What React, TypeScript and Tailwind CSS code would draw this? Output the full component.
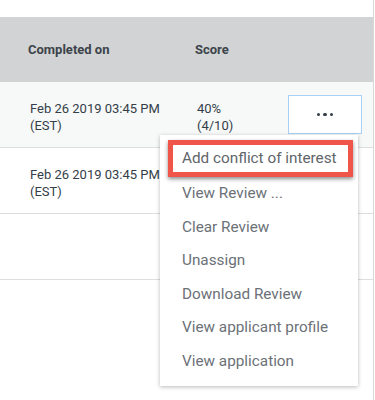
import React from "react";

const font = { fontFamily: 'Roboto, "Open Sans", Arial, sans-serif' };

function Row({ bg, score, action }: { bg: string; score?: [string, string]; action?: boolean }) {
  return (
    <div className={`flex h-[66px] items-center border-b border-[#dcdedf] ${bg}`}>
      <div className="w-[195px] pl-[30px] pt-[4px] text-[13px] leading-[17px] text-[#333e48]">
        <div>Feb 26 2019 03:45 PM</div>
        <div>(EST)</div>
      </div>
      <div className="w-[93px] pl-[2px] pt-[4px] text-[13px] leading-[17px] text-[#333e48]">
        {score && (
          <>
            <div>{score[0]}</div>
            <div>{score[1]}</div>
          </>
        )}
      </div>
      {action && (
        <button className="flex h-[39px] w-[74px] items-center justify-center gap-[3px] border border-[#a9d1f7] bg-white">
          <span className="h-[3.5px] w-[3.5px] rounded-full bg-[#333e48]" />
          <span className="h-[3.5px] w-[3.5px] rounded-full bg-[#333e48]" />
          <span className="h-[3.5px] w-[3.5px] rounded-full bg-[#333e48]" />
        </button>
      )}
    </div>
  );
}

export default function App() {
  const items = [
    "View Review ...",
    "Clear Review",
    "Unassign",
    "Download Review",
    "View applicant profile",
    "View application",
  ];
  return (
    <div className="relative h-[400px] w-[375px] overflow-hidden bg-white" style={font}>
      <div className="h-[400px] w-[374px] border-r border-[#d6d8d9] pt-[17px]">
        <div className="flex h-[65px] items-center bg-[#d1d3d4] text-[13px] font-bold text-[#3d434a]">
          <div className="w-[195px] pl-[28px]">Completed on</div>
          <div>Score</div>
        </div>
        <Row bg="bg-[#f7f8f8]" score={["40%", "(4/10)"]} action />
        <Row bg="bg-white" />
        <div className="h-[66px] border-b border-[#dcdedf]" />
      </div>

      <div className="absolute left-[160px] top-[135px] w-[198px] bg-white pb-[8px] pt-[5px] shadow-[0_1px_4px_rgba(0,0,0,0.28)]">
        <div className="mx-[8px] flex h-[37px] w-[185px] items-center border-[5px] border-[#f0554a] pl-[9px] text-[15.3px] text-[#5f656b] shadow-[0_2px_4px_rgba(0,0,0,0.45)]">
          Add conflict of interest
        </div>
        {items.map((t) => (
          <div key={t} className="flex h-[33.5px] items-center pl-[22px] text-[15.3px] text-[#6b7177]">
            {t}
          </div>
        ))}
      </div>
    </div>
  );
}
